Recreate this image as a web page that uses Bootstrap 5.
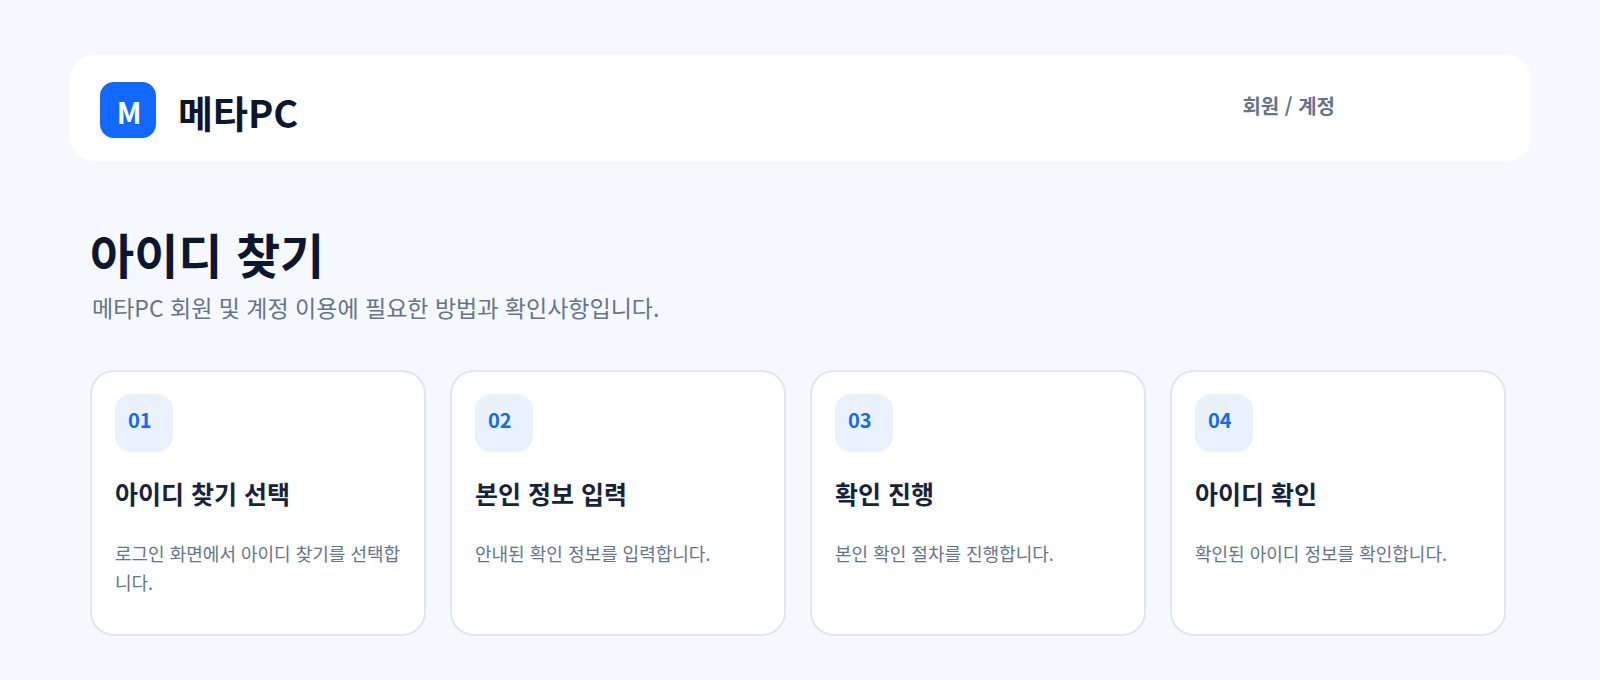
<!DOCTYPE html>
<html lang="ko">
<head>
<meta charset="utf-8">
<meta name="viewport" content="width=device-width, initial-scale=1">
<title>메타PC 아이디 찾기</title>
<link href="https://cdn.jsdelivr.net/npm/bootstrap@5.3.0/dist/css/bootstrap.min.css" rel="stylesheet">
<style>
body { background: #f5f8fd; color: #0b1730; font-family: "Noto Sans CJK KR", sans-serif; padding: 55px 69px 44px 70px; }
.site-bar { background: #fff; border-radius: 24px; padding: 27px 30px 19px; }
.logo-tile { width: 56px; height: 56px; border-radius: 14px; background: #1268ff; color: #fff; font-size: 29px; line-height: 58px; padding-left: 2px; }
.site-name { font-size: 38px; line-height: 60px; margin-left: 22px; }
.section-label { font-size: 20px; line-height: 30px; margin: 9px 166px 0 0; color: #64748b; }
.guide { padding: 60px 25px 0 20px; }
.page-title { font-size: 48px; line-height: 64px; margin: 0; }
.intro { font-size: 23px; line-height: 36px; color: #64748b; margin: 4px 0 45px 2px; }
.steps { --bs-gutter-x: 24px; --bs-gutter-y: 24px; }
.step-card { background: #fff; border: 2px solid #dee6f1; border-radius: 24px; padding: 22px 23px 37px; }
.step-no { width: 58px; height: 58px; border-radius: 16px; background: #eaf2ff; color: #1268ff; font-size: 20px; line-height: 52px; padding-left: 13px; }
.step-title { color: #17233b; font-size: 25px; line-height: 38px; margin: 22px 0 27px; }
.step-text { font-size: 18px; line-height: 29px; color: #64748b; margin: 0; word-break: break-all; }
</style>
</head>
<body>
<header class="site-bar d-flex justify-content-between align-items-start">
  <div class="d-flex">
    <div class="logo-tile text-center fw-bold">M</div>
    <div class="site-name fw-bold">메타PC</div>
  </div>
  <div class="section-label fw-bold">회원 / 계정</div>
</header>
<main class="guide">
  <h1 class="page-title fw-bold">아이디 찾기</h1>
  <p class="intro">메타PC 회원 및 계정 이용에 필요한 방법과 확인사항입니다.</p>
  <div class="steps row row-cols-1 row-cols-md-2 row-cols-lg-4">
    <div class="col"><section class="step-card h-100"><div class="step-no fw-bold">01</div><h2 class="step-title fw-bold">아이디 찾기 선택</h2><p class="step-text">로그인 화면에서 아이디 찾기를 선택합니다.</p></section></div>
    <div class="col"><section class="step-card h-100"><div class="step-no fw-bold">02</div><h2 class="step-title fw-bold">본인 정보 입력</h2><p class="step-text">안내된 확인 정보를 입력합니다.</p></section></div>
    <div class="col"><section class="step-card h-100"><div class="step-no fw-bold">03</div><h2 class="step-title fw-bold">확인 진행</h2><p class="step-text">본인 확인 절차를 진행합니다.</p></section></div>
    <div class="col"><section class="step-card h-100"><div class="step-no fw-bold">04</div><h2 class="step-title fw-bold">아이디 확인</h2><p class="step-text">확인된 아이디 정보를 확인합니다.</p></section></div>
  </div>
</main>
<script src="https://cdn.jsdelivr.net/npm/bootstrap@5.3.0/dist/js/bootstrap.bundle.min.js"></script>
</body>
</html>
